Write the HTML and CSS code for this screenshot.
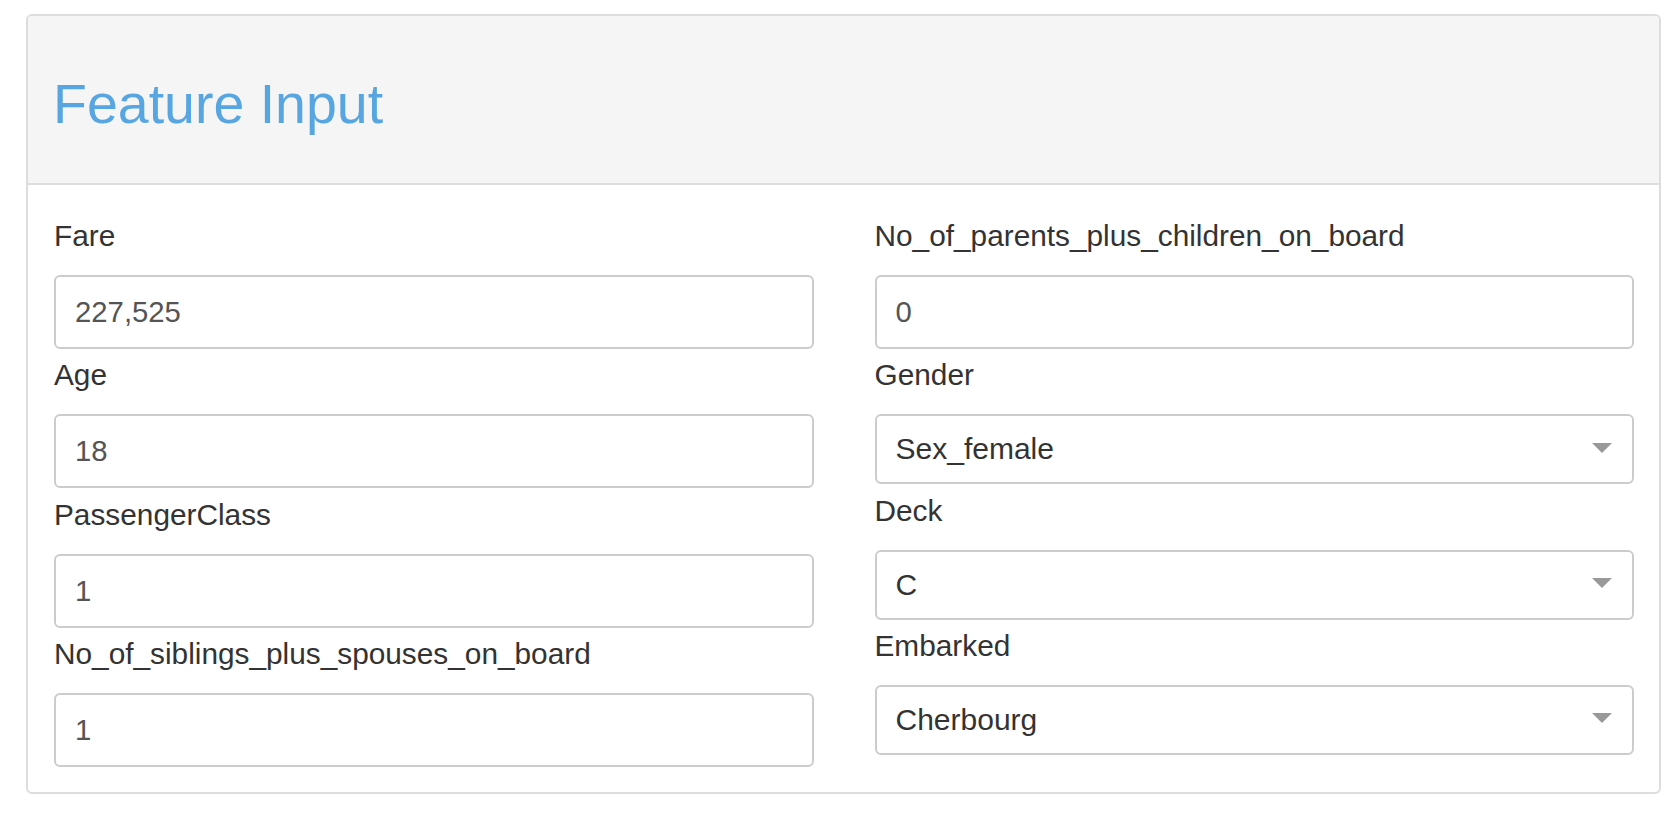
FILE: index.html
```html
<!DOCTYPE html>
<html lang="en">
<head>
<meta charset="utf-8">
<title>Feature Input</title>
<link rel="stylesheet" href="styles.css">
</head>
<body>
<div class="page">
  <div class="panel">
    <div class="panel-heading">
      <h3 class="panel-title">Feature Input</h3>
    </div>
    <div class="panel-body">
      <div class="col">
        <div class="field">
          <label class="field-label">Fare</label>
          <div class="text-input">227,525</div>
        </div>
        <div class="field">
          <label class="field-label">Age</label>
          <div class="text-input">18</div>
        </div>
        <div class="field">
          <label class="field-label">PassengerClass</label>
          <div class="text-input">1</div>
        </div>
        <div class="field">
          <label class="field-label">No_of_siblings_plus_spouses_on_board</label>
          <div class="text-input">1</div>
        </div>
      </div>
      <div class="col">
        <div class="field">
          <label class="field-label">No_of_parents_plus_children_on_board</label>
          <div class="text-input">0</div>
        </div>
        <div class="field">
          <label class="field-label">Gender</label>
          <div class="dropdown"><span class="dropdown-value">Sex_female</span><span class="dropdown-arrow"></span></div>
        </div>
        <div class="field">
          <label class="field-label">Deck</label>
          <div class="dropdown"><span class="dropdown-value">C</span><span class="dropdown-arrow"></span></div>
        </div>
        <div class="field">
          <label class="field-label">Embarked</label>
          <div class="dropdown"><span class="dropdown-value">Cherbourg</span><span class="dropdown-arrow"></span></div>
        </div>
      </div>
    </div>
  </div>
</div>
</body>
</html>
```

FILE: styles.css
```css
* {
  box-sizing: border-box;
}

html, body {
  margin: 0;
  padding: 0;
  background: #ffffff;
}

body {
  font-family: "Liberation Sans", Arial, Helvetica, sans-serif;
  color: #333333;
}

.page {
  padding: 14px 19px 0 26px;
}

.panel {
  border: 2px solid #dddddd;
  border-radius: 6px;
  background: #ffffff;
  overflow: hidden;
}

.panel-heading {
  background: #f5f5f5;
  border-bottom: 2px solid #dddddd;
  height: 169px;
  padding: 58px 25px 0 25px;
}

.panel-title {
  margin: 0;
  font-size: 55.5px;
  line-height: 60px;
  font-weight: normal;
  color: #57a6e1;
}

.panel-body {
  display: grid;
  grid-template-columns: 1fr 1fr;
  column-gap: 61px;
  padding: 30px 25px 25px 26px;
}

.col {
  display: flex;
  flex-direction: column;
  gap: 5.33px;
}

.field {
  display: flex;
  flex-direction: column;
}

.field-label {
  display: block;
  font-size: 29.8px;
  line-height: 41px;
  margin-bottom: 19px;
  color: #333333;
}

.text-input {
  height: 74px;
  border: 2px solid #cccccc;
  border-radius: 6px;
  padding: 0 19px;
  display: flex;
  align-items: center;
  font-size: 29.3px;
  color: #555555;
  background: #ffffff;
}

.dropdown {
  height: 70px;
  border: 2px solid #cccccc;
  border-radius: 6px;
  padding: 0 20px 0 19px;
  display: flex;
  align-items: center;
  font-size: 30px;
  color: #333333;
  background: #ffffff;
}

.dropdown-value {
  flex: 1;
}

.dropdown-arrow {
  width: 0;
  height: 0;
  border-left: 10px solid transparent;
  border-right: 10px solid transparent;
  border-top: 10px solid #999999;
  margin-top: -3px;
}
```
